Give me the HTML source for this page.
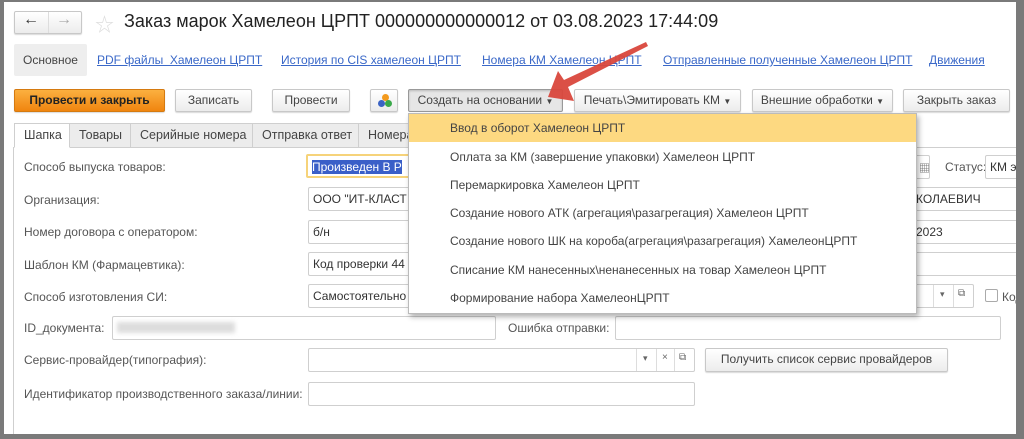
<!DOCTYPE html>
<html><head><meta charset="utf-8"><style>
*{box-sizing:border-box;margin:0;padding:0}
body{width:1024px;height:439px;background:#7a7a7a;position:relative;overflow:hidden;font-family:"Liberation Sans","Noto Sans CJK SC",sans-serif;color:#4a4a4a}
.win{position:absolute;left:4px;top:2px;width:1012px;height:432px;background:#fff}
.a{position:absolute;white-space:nowrap}
.btn{position:absolute;height:23px;border:1px solid #c8c8c8;border-radius:2px;background:linear-gradient(#fff,#ececec);font-size:12px;color:#444;text-align:center;line-height:21px;box-shadow:0 1px 1px rgba(0,0,0,.15)}
.lnk{position:absolute;top:53px;font-size:12px;color:#3a68c8;text-decoration:underline}
.tab{position:absolute;top:123px;height:25px;border:1px solid #cfcfcf;background:#ececec;font-size:12.5px;line-height:23px;padding-left:9px;color:#444}
.lbl{position:absolute;left:24px;font-size:12px;color:#555}
.fld{position:absolute;height:24px;border:1px solid #cfcfcf;border-radius:2px;background:#fff;font-size:12px;line-height:22px;padding-left:4px;color:#333;overflow:hidden;white-space:nowrap}
.mi{position:absolute;left:450px;font-size:12px;color:#444}
</style></head><body>
<div class="win"></div>
<!-- nav buttons -->
<div class="btn" style="left:14px;top:11px;width:68px;height:23px"></div>
<div class="a" style="left:48px;top:12px;height:21px;border-left:1px solid #ddd"></div>
<div class="a" style="left:23px;top:11px;font-size:16px;color:#333">&#8592;</div>
<div class="a" style="left:56px;top:11px;font-size:16px;color:#aaa">&#8594;</div>
<div class="a" style="left:95px;top:10px;font-size:19px;color:#ddd">&#9734;</div>
<div class="a" style="left:124px;top:11px;font-size:18px;color:#222">Заказ марок Хамелеон ЦРПТ 000000000000012 от 03.08.2023 17:44:09</div>
<!-- nav -->
<div class="a" style="left:14px;top:44px;width:73px;height:32px;background:#eee;border-radius:2px"></div>
<div class="a" style="left:23px;top:53px;font-size:12px;color:#444">Основное</div>
<div class="lnk" style="left:97px">PDF файлы&nbsp; Хамелеон ЦРПТ</div>
<div class="lnk" style="left:281px">История по CIS хамелеон ЦРПТ</div>
<div class="lnk" style="left:482px">Номера КМ Хамелеон ЦРПТ</div>
<div class="lnk" style="left:663px">Отправленные полученные Хамелеон ЦРПТ</div>
<div class="lnk" style="left:929px">Движения</div>
<!-- buttons -->
<div class="btn" style="left:14px;top:89px;width:151px;background:linear-gradient(#fbb040,#f0850f);border-color:#d57a10;color:#222;font-weight:bold">Провести и закрыть</div>
<div class="btn" style="left:175px;top:89px;width:77px">Записать</div>
<div class="btn" style="left:272px;top:89px;width:78px">Провести</div>
<div class="btn" style="left:370px;top:89px;width:28px"></div>
<div class="a" style="left:382px;top:94px;width:7px;height:7px;border-radius:50%;background:#f39a1e"></div>
<div class="a" style="left:378px;top:100px;width:7px;height:7px;border-radius:50%;background:#3b63c4"></div>
<div class="a" style="left:385px;top:100px;width:7px;height:7px;border-radius:50%;background:#3aa94a"></div>
<div class="btn" style="left:408px;top:89px;width:155px;background:#e6e6e6;border-color:#999;box-shadow:inset 0 1px 2px rgba(0,0,0,.2)">Создать на основании <span style="font-size:8px">▼</span></div>
<div class="btn" style="left:574px;top:89px;width:167px">Печать\Эмитировать КМ <span style="font-size:8px">▼</span></div>
<div class="btn" style="left:752px;top:89px;width:141px">Внешние обработки <span style="font-size:8px">▼</span></div>
<div class="btn" style="left:903px;top:89px;width:107px">Закрыть заказ</div>
<!-- tabs -->
<div class="a" style="left:14px;top:147px;width:1002px;border-top:1px solid #cfcfcf"></div>
<div class="a" style="left:13px;top:147px;height:287px;border-left:1px solid #cfcfcf"></div>
<div class="tab" style="left:69px;width:62px">Товары</div>
<div class="tab" style="left:130px;width:123px">Серийные номера</div>
<div class="tab" style="left:252px;width:107px">Отправка ответ</div>
<div class="tab" style="left:358px;width:60px">Номера</div>
<div class="tab" style="left:14px;width:56px;background:#fff;border-bottom-color:#fff">Шапка</div>
<!-- labels -->
<div class="lbl" style="top:160px">Способ выпуска товаров:</div>
<div class="lbl" style="top:193px">Организация:</div>
<div class="lbl" style="top:225px">Номер договора с оператором:</div>
<div class="lbl" style="top:258px">Шаблон КМ (Фармацевтика):</div>
<div class="lbl" style="top:290px">Способ изготовления СИ:</div>
<div class="lbl" style="top:321px">ID_документа:</div>
<div class="lbl" style="top:353px">Сервис-провайдер(типография):</div>
<div class="lbl" style="top:387px">Идентификатор производственного заказа/линии:</div>
<!-- fields -->
<div class="fld" style="left:306px;top:154px;width:120px;border:2px solid #f6d37a"><span style="background:#3a5fc8;color:#fff">Произведен В Р</span></div>
<div class="fld" style="left:308px;top:187px;width:120px">ООО "ИТ-КЛАСТ</div>
<div class="fld" style="left:308px;top:220px;width:120px">б/н</div>
<div class="fld" style="left:308px;top:252px;width:120px">Код проверки 44</div>
<div class="fld" style="left:308px;top:284px;width:120px">Самостоятельно</div>
<div class="fld" style="left:900px;top:155px;width:30px"></div>
<div class="a" style="left:919px;top:160px;font-size:11px;color:#666">▦</div>
<div class="a" style="left:945px;top:160px;font-size:12px;color:#555">Статус:</div>
<div class="fld" style="left:985px;top:155px;width:40px">КМ эм</div>
<div class="fld" style="left:900px;top:187px;width:120px;border-left:none;padding-left:16px">КОЛАЕВИЧ</div>
<div class="fld" style="left:900px;top:220px;width:120px;border-left:none;padding-left:16px">2023</div>
<div class="a" style="left:900px;top:252px;width:120px;height:24px;border:1px solid #cfcfcf;border-left:none"></div>
<div class="fld" style="left:900px;top:284px;width:74px;border-left:none"></div>
<div class="a" style="left:933px;top:285px;height:22px;border-left:1px solid #ddd"></div>
<div class="a" style="left:953px;top:285px;height:22px;border-left:1px solid #ddd"></div>
<div class="a" style="left:940px;top:289px;font-size:9px;color:#666">▾</div>
<div class="a" style="left:958px;top:288px;font-size:10px;color:#666">⧉</div>
<div class="a" style="left:985px;top:289px;width:13px;height:13px;border:1px solid #aaa;border-radius:2px"></div>
<div class="a" style="left:1002px;top:290px;font-size:12px;color:#555">Код</div>
<div class="fld" style="left:112px;top:316px;width:384px"><span style="display:inline-block;margin-top:5px;width:118px;height:11px;background:#ddd;filter:blur(2px)"></span></div>
<div class="a" style="left:508px;top:321px;font-size:12px;color:#555">Ошибка отправки:</div>
<div class="fld" style="left:615px;top:316px;width:386px"></div>
<div class="fld" style="left:308px;top:348px;width:387px"></div>
<div class="a" style="left:636px;top:349px;height:22px;border-left:1px solid #ddd"></div>
<div class="a" style="left:656px;top:349px;height:22px;border-left:1px solid #ddd"></div>
<div class="a" style="left:674px;top:349px;height:22px;border-left:1px solid #ddd"></div>
<div class="a" style="left:643px;top:353px;font-size:9px;color:#666">▾</div>
<div class="a" style="left:662px;top:352px;font-size:10px;color:#666">×</div>
<div class="a" style="left:679px;top:352px;font-size:10px;color:#666">⧉</div>
<div class="btn" style="left:705px;top:348px;width:243px;height:24px;font-size:12px">Получить список сервис провайдеров</div>
<div class="fld" style="left:308px;top:382px;width:387px"></div>
<!-- right frame cover -->
<div class="a" style="left:1016px;top:0;width:8px;height:439px;background:#7a7a7a"></div>
<!-- dropdown -->
<div class="a" style="left:408px;top:113px;width:509px;height:201px;background:#fff;border:1px solid #bbb;box-shadow:2px 3px 5px rgba(0,0,0,.3)"></div>
<div class="a" style="left:409px;top:114px;width:507px;height:28px;background:#fdd981"></div>
<div class="mi" style="top:121px">Ввод в оборот Хамелеон ЦРПТ</div>
<div class="mi" style="top:150px">Оплата за КМ (завершение упаковки) Хамелеон ЦРПТ</div>
<div class="mi" style="top:178px">Перемаркировка Хамелеон ЦРПТ</div>
<div class="mi" style="top:206px">Создание нового АТК (агрегация\разагрегация) Хамелеон ЦРПТ</div>
<div class="mi" style="top:234px">Создание нового ШК на короба(агрегация\разагрегация) ХамелеонЦРПТ</div>
<div class="mi" style="top:263px">Списание КМ нанесенных\ненанесенных на товар Хамелеон ЦРПТ</div>
<div class="mi" style="top:291px">Формирование набора ХамелеонЦРПТ</div>
<!-- arrow -->
<svg class="a" style="left:0;top:0" width="1024" height="439"><path d="M646 42 L648 46 L568 87 L574 101 L548 97 L558 71 L564 80 Z" fill="#d9473c" opacity=".95"/></svg>
</body></html>
